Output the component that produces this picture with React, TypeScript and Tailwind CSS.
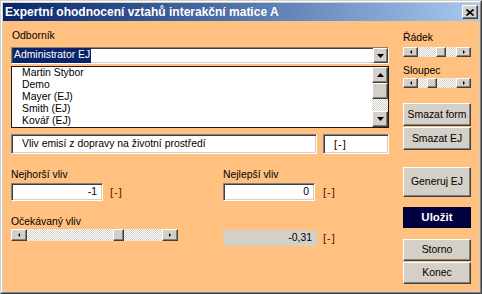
import React from "react";

const raised =
  "border border-t-white border-l-white border-r-[#404040] border-b-[#404040] shadow-[inset_-1px_-1px_0_#808080,inset_1px_1px_0_#d4d0c8] bg-[#d4d0c8]";
const sunken =
  "border border-t-[#808080] border-l-[#808080] border-r-white border-b-white shadow-[inset_1px_1px_0_#404040,inset_-1px_-1px_0_#d4d0c8] bg-white";
const dither =
  "bg-[repeating-conic-gradient(#d4d0c8_0_25%,#ffffff_0_50%)] bg-[length:2px_2px]";

function Tri({ dir, w, h }: { dir: "up" | "down" | "left" | "right"; w: number; h: number }) {
  let pts = "";
  if (dir === "up") pts = `0,${h} ${w / 2},0 ${w},${h}`;
  if (dir === "down") pts = `0,0 ${w},0 ${w / 2},${h}`;
  if (dir === "left") pts = `${w},0 ${w},${h} 0,${h / 2}`;
  if (dir === "right") pts = `0,0 0,${h} ${w},${h / 2}`;
  return (
    <svg width={w} height={h} viewBox={`0 0 ${w} ${h}`} className="block">
      <polygon points={pts} fill="#000" />
    </svg>
  );
}

function HScroll({ width, height, arrow, thumbLeft, thumbW }: { width: number; height: number; arrow: number; thumbLeft: number; thumbW: number }) {
  return (
    <div className={`relative flex ${dither}`} style={{ width, height }}>
      <div className={`${raised} flex items-center justify-center shrink-0`} style={{ width: arrow, height }}>
        <Tri dir="left" w={2} h={4} />
      </div>
      <div className="flex-1" />
      <div className={`${raised} flex items-center justify-center shrink-0`} style={{ width: arrow, height }}>
        <Tri dir="right" w={2} h={4} />
      </div>
      <div className={`${raised} absolute top-0`} style={{ left: thumbLeft, width: thumbW, height }} />
    </div>
  );
}

function Btn({ label, h, mt }: { label: string; h: string; mt: string }) {
  return (
    <div className={`${raised} ${h} ${mt} w-[68px] flex items-center justify-center text-[10.4px] text-black`}>
      {label}
    </div>
  );
}

const Unit = ({ className = "" }: { className?: string }) => (
  <span className={`text-[#4a1800] text-[11px] tracking-[1px] ${className}`}>[-]</span>
);

export default function App() {
  const items = ["Martin Stybor", "Demo", "Mayer (EJ)", "Smith (EJ)", "Kovář (EJ)"];
  return (
    <div className="w-[482px] h-[294px] font-['Liberation_Sans',Arial,sans-serif] text-[10.4px] text-black border border-t-[#d4d0c8] border-l-[#d4d0c8] border-r-[#404040] border-b-[#404040]">
      <div className="w-full h-full border border-t-white border-l-white border-r-[#808080] border-b-[#808080] bg-[#d4d0c8] p-[1px] flex flex-col">
        {/* Title bar */}
        <div className="h-[18px] shrink-0 flex bg-linear-to-r from-[#0a246a] to-[#a6caf0]">
          <div className="pl-[2px] text-white font-bold text-[12px] leading-[18px]">
            Expertní ohodnocení vztahů interakční matice A
          </div>
          <div className={`${raised} ml-auto mr-[1px] mt-[2px] w-[16px] h-[14px] flex items-center justify-center`}>
            <svg width="8" height="7" viewBox="0 0 8 7" className="block">
              <path d="M0.5 0.5 L7.5 6.5 M7.5 0.5 L0.5 6.5" stroke="#000" strokeWidth="1.6" />
            </svg>
          </div>
        </div>

        {/* Body */}
        <div className="flex-1 bg-[#ffc080] flex">
          {/* Left column */}
          <div className="ml-[8px] w-[378px] flex flex-col">
            <div className="mt-[8px] h-[13px] leading-[13px] pl-[1px]">Odborník</div>

            {/* Combo */}
            <div className={`${sunken} mt-[5px] h-[17px] flex items-stretch`}>
              <div className="flex-1 flex items-stretch pl-[1px]">
                <span className="bg-[#0a246a] text-white px-[1px] leading-[13px]">Administrator EJ</span>
              </div>
              <div className={`${raised} w-[15px] flex items-center justify-center`}>
                <Tri dir="down" w={7} h={4} />
              </div>
            </div>

            {/* List */}
            <div className="mt-[2px] h-[62px] border border-[#1a1a1a] bg-white flex">
              <div className="flex-1 pl-[10px] overflow-hidden">
                {items.map((t) => (
                  <div key={t} className="h-[12px] leading-[12px]">
                    {t}
                  </div>
                ))}
              </div>
              <div className={`w-[16px] flex flex-col ${dither}`}>
                <div className={`${raised} h-[16px] flex items-center justify-center`}>
                  <Tri dir="up" w={7} h={4} />
                </div>
                <div className={`${raised} h-[16px]`} />
                <div className="flex-1" />
                <div className={`${raised} h-[16px] flex items-center justify-center`}>
                  <Tri dir="down" w={7} h={4} />
                </div>
              </div>
            </div>

            {/* Description row */}
            <div className="mt-[6px] h-[20px] flex">
              <div className={`${sunken} w-[306px] flex items-center pl-[10px]`}>
                Vliv emisí z dopravy na životní prostředí
              </div>
              <div className={`${sunken} ml-[6px] w-[66px] flex items-center pl-[10px] text-[11px] tracking-[1px]`}>[-]</div>
            </div>

            {/* Worst / best */}
            <div className="mt-[14px] grid grid-cols-[212px_1fr]">
              <div className="h-[13px] leading-[13px]">Nejhorší vliv</div>
              <div className="h-[13px] leading-[13px]">Nejlepší vliv</div>

              <div className="mt-[2px] flex items-center">
                <div className={`${sunken} w-[92px] h-[18px] flex items-center justify-end pr-[5px]`}>-1</div>
                <Unit className="ml-[7px]" />
              </div>
              <div className="mt-[2px] flex items-center">
                <div className={`${sunken} w-[92px] h-[18px] flex items-center justify-end pr-[5px]`}>0</div>
                <Unit className="ml-[8px]" />
              </div>

              <div className="mt-[14px] h-[13px] leading-[13px] col-span-2">Očekávaný vliv</div>

              <div className="mt-[1px]">
                <HScroll width={167} height={12} arrow={16} thumbLeft={102} thumbW={11} />
              </div>
              <div className="mt-[2px] flex items-center">
                <div className="bg-[#d4d0c8] w-[94px] h-[16px] flex items-center justify-end pr-[5px]">-0,31</div>
                <Unit className="ml-[6px]" />
              </div>
            </div>
          </div>

          {/* Right column */}
          <div className="ml-[14px] w-[68px] flex flex-col">
            <div className="mt-[10px] h-[13px] leading-[13px]">Řádek</div>
            <div className="mt-[3px]">
              <HScroll width={68} height={10} arrow={15} thumbLeft={33} thumbW={10} />
            </div>
            <div className="mt-[7px] h-[13px] leading-[13px]">Sloupec</div>
            <div className="mt-[1px]">
              <HScroll width={68} height={10} arrow={15} thumbLeft={24} thumbW={10} />
            </div>
            <Btn label="Smazat form" h="h-[23px]" mt="mt-[15px]" />
            <Btn label="Smazat EJ" h="h-[23px]" mt="mt-[1px]" />
            <Btn label="Generuj EJ" h="h-[30px]" mt="mt-[17px]" />
            <div className="mt-[10px] h-[21px] w-[68px] bg-[#000040] border border-[#000020] flex items-center justify-center text-white font-bold text-[11.5px]">
              Uložit
            </div>
            <Btn label="Storno" h="h-[22px]" mt="mt-[11px]" />
            <Btn label="Konec" h="h-[22px]" mt="mt-[1px]" />
          </div>
        </div>
      </div>
    </div>
  );
}
